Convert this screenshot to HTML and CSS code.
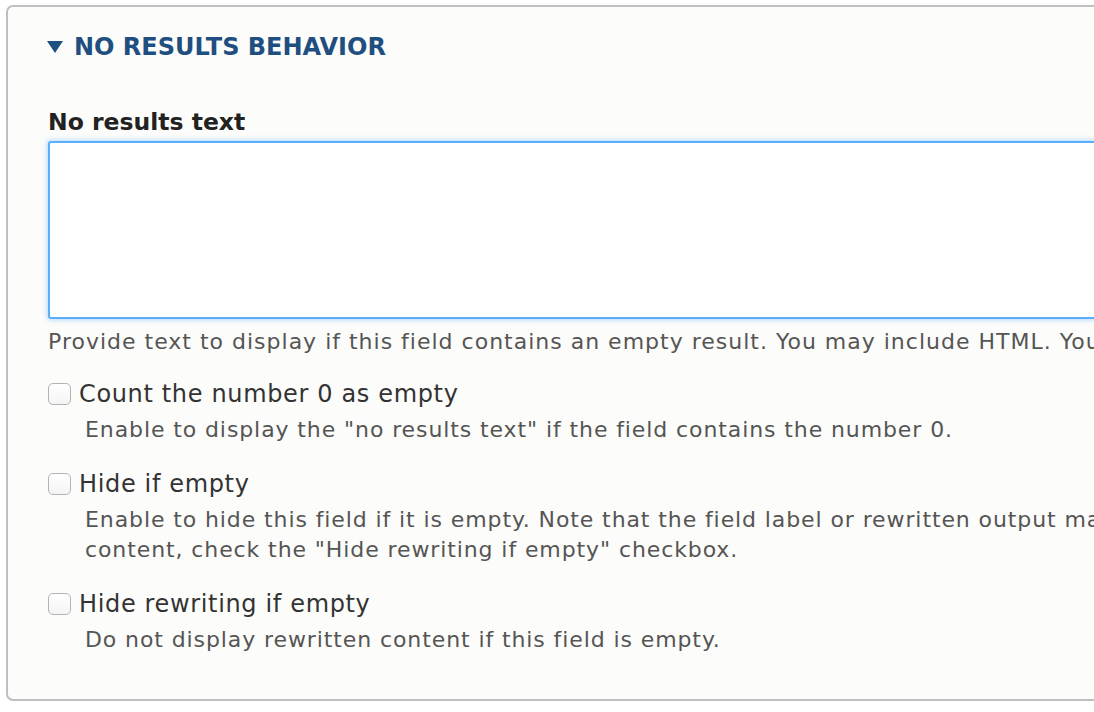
FILE: index.html
```html
<!DOCTYPE html>
<html>
<head>
<meta charset="utf-8">
<link rel="stylesheet" href="styles.css">
</head>
<body>
<div class="page">
  <fieldset class="panel">
    <div class="summary"><span class="caret"></span><span class="summary-text">NO RESULTS BEHAVIOR</span></div>
    <div class="field">
      <label class="field-label">No results text</label>
      <div class="textarea"></div>
      <div class="desc">Provide text to display if this field contains an empty result. You may include HTML. You can use replacement tokens.</div>
    </div>
    <div class="check">
      <div class="check-row"><span class="box"></span><span class="check-label">Count the number 0 as empty</span></div>
      <div class="check-desc">Enable to display the "no results text" if the field contains the number 0.</div>
    </div>
    <div class="check">
      <div class="check-row"><span class="box"></span><span class="check-label">Hide if empty</span></div>
      <div class="check-desc">Enable to hide this field if it is empty. Note that the field label or rewritten output may still be displayed. To hide labels, check the style or row style settings for empty fields. To hide rewritten<br>content, check the "Hide rewriting if empty" checkbox.</div>
    </div>
    <div class="check">
      <div class="check-row"><span class="box"></span><span class="check-label">Hide rewriting if empty</span></div>
      <div class="check-desc">Do not display rewritten content if this field is empty.</div>
    </div>
  </fieldset>
</div>
</body>
</html>
```

FILE: styles.css
```css
html, body {
  margin: 0;
  padding: 0;
  background: #ffffff;
  overflow: hidden;
  width: 1094px;
  height: 712px;
}
.page {
  padding: 5px 0 0 6px;
}
.panel {
  margin: 0;
  width: 1200px;
  height: 696px;
  box-sizing: border-box;
  border: 2px solid #bfbfbf;
  border-radius: 7px;
  background: #fcfcfa;
  padding: 0 0 0 40px;
  font-family: "DejaVu Sans", sans-serif;
  white-space: nowrap;
}
.summary {
  display: flex;
  align-items: center;
  margin-top: 25px;
  height: 30px;
  color: #1f4f80;
}
.caret {
  width: 0;
  height: 0;
  border-left: 8px solid transparent;
  border-right: 8px solid transparent;
  border-top: 12px solid #1f4f80;
  margin-right: 11px;
  margin-left: -1px;
}
.summary-text {
  font-weight: bold;
  font-size: 24px;
  letter-spacing: 0;
}
.field {
  margin-top: 46px;
}
.field-label {
  display: block;
  font-weight: bold;
  font-size: 23.5px;
  color: #222;
  line-height: 28px;
}
.textarea {
  margin-top: 5px;
  height: 178px;
  box-sizing: border-box;
  border: 2px solid #5aaefb;
  border-radius: 3px;
  background: #fff;
  box-shadow: 0 0 5px 1px rgba(90, 174, 251, 0.45);
}
.desc {
  margin-top: 10px;
  font-size: 22px;
  letter-spacing: 1px;
  color: #555;
  line-height: 26px;
}
.check {
  margin-top: 26px;
}
.check-row {
  display: flex;
  align-items: center;
  height: 26px;
}
.box {
  flex: none;
  width: 23px;
  height: 22px;
  box-sizing: border-box;
  border: 1px solid #b3b3b3;
  border-radius: 5px;
  background: linear-gradient(#ffffff, #f4f4f4);
  margin-right: 8px;
}
.check-label {
  font-size: 24px;
  letter-spacing: 0.65px;
  color: #333;
}
.check-desc {
  margin-top: 8px;
  margin-left: 37px;
  font-size: 22px;
  letter-spacing: 0.9px;
  color: #555;
  line-height: 30px;
}
```
